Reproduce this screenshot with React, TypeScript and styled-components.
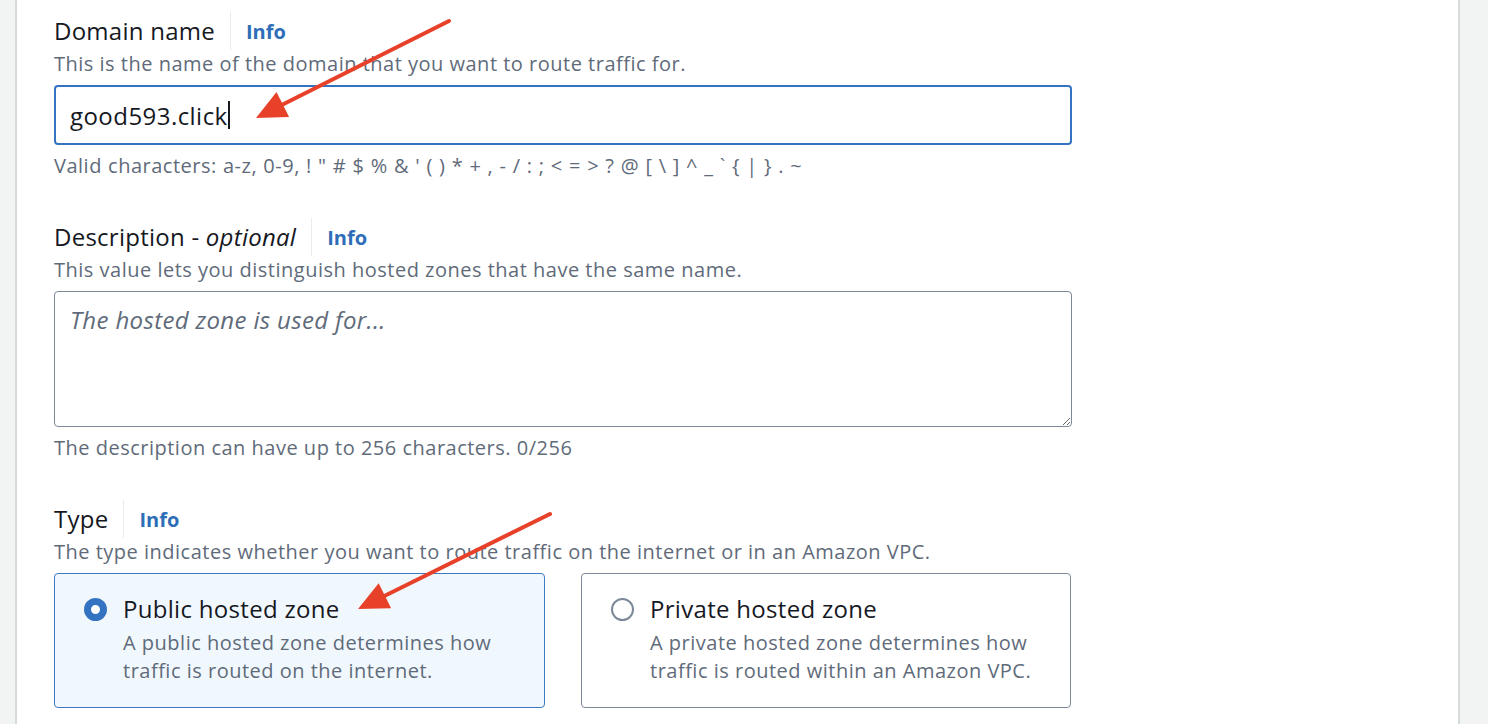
import React from "react";
import styled, { createGlobalStyle } from "styled-components";

const Global = createGlobalStyle`
  html, body { margin: 0; padding: 0; background: #f2f3f3; }
  body { font-family: "Open Sans", "Noto Sans", Arial, sans-serif; }
  * { box-sizing: border-box; }
`;

const Page = styled.div`
  position: relative;
  display: flex;
  width: 1488px;
  height: 724px;
  overflow: hidden;
  background: #f2f3f3;
`;

const Gutter = styled.div<{ $side: "left" | "right"; $w: number }>`
  flex: 0 0 ${(p) => p.$w}px;
  background: #f2f3f3;
  ${(p) => (p.$side === "left" ? "border-right" : "border-left")}: 2px solid #d5dbdb;
`;

const Panel = styled.main`
  flex: 1;
  background: #ffffff;
  padding: 12px 0 0 37px;
`;

const Column = styled.div`
  width: 1018px;
  display: flex;
  flex-direction: column;
  gap: 38px;
`;

const Field = styled.section`
  display: flex;
  flex-direction: column;
`;

const LabelRow = styled.div`
  display: flex;
  align-items: center;
  height: 38px;
`;

const Label = styled.span`
  font-size: 24px;
  letter-spacing: 0.25px;
  color: #16191f;
  padding-right: 15px;
  line-height: 38px;
  border-right: 1px solid #e9ebed;
  em { font-style: italic; }
`;

const Info = styled.a`
  font-size: 20px;
  font-weight: 700;
  color: #2e6eb8;
  padding-left: 15px;
  text-decoration: none;
`;

const Hint = styled.div<{ $wordGap?: number }>`
  font-size: 20px;
  letter-spacing: 0.5px;
  word-spacing: ${(p) => p.$wordGap ?? 0}px;
  line-height: 28px;
  color: #5f6b7a;
`;

const Constraint = styled(Hint)`
  margin-top: 7px;
`;

const InputBox = styled.div`
  margin-top: 7px;
  height: 60px;
  border: 2px solid #3473c2;
  border-radius: 4px;
  padding: 0 14px;
  display: flex;
  align-items: center;
  font-size: 24px;
  letter-spacing: 0.45px;
  color: #16191f;
`;

const Caret = styled.span`
  display: inline-block;
  width: 2px;
  height: 28px;
  background: #16191f;
`;

const TextArea = styled.textarea`
  margin-top: 7px;
  height: 136px;
  width: 100%;
  border: 1px solid #7d8998;
  border-radius: 4px;
  padding: 11px 15px;
  font-family: "Open Sans", "Noto Sans", Arial, sans-serif;
  font-size: 24px;
  letter-spacing: 0.35px;
  line-height: 34px;
  color: #16191f;
  resize: vertical;
  outline: none;
  &::placeholder {
    color: #5f6b7a;
    font-style: italic;
  }
`;

const Tiles = styled.div`
  margin-top: 7px;
  display: grid;
  grid-template-columns: 491px 490px;
  gap: 36px;
`;

const Tile = styled.label<{ $on?: boolean }>`
  display: flex;
  gap: 16px;
  height: 135px;
  padding: 21px 20px 0 29px;
  border: 1px solid ${(p) => (p.$on ? "#3f7ac4" : "#7d8998")};
  background: ${(p) => (p.$on ? "#f1f8fd" : "#ffffff")};
  border-radius: 4px;
`;

const Radio = styled.span<{ $on?: boolean }>`
  flex: 0 0 auto;
  width: 23px;
  height: 23px;
  margin-top: 3px;
  border-radius: 50%;
  ${(p) =>
    p.$on
      ? "border: 7px solid #3473c2; background: #fff;"
      : "border: 2px solid #7d8998; background: #fff;"}
`;

const TileText = styled.div`
  display: flex;
  flex-direction: column;
`;

const TileTitle = styled.div`
  font-size: 24px;
  letter-spacing: 0.3px;
  line-height: 28px;
  color: #16191f;
`;

const TileDesc = styled(Hint)`
  margin-top: 6px;
`;

const Arrows = styled.svg`
  position: absolute;
  left: 0;
  top: 0;
  pointer-events: none;
`;

const Arrow = ({ x1, y1, x2, y2 }: { x1: number; y1: number; x2: number; y2: number }) => {
  const dx = x2 - x1;
  const dy = y2 - y1;
  const len = Math.hypot(dx, dy);
  const ux = dx / len;
  const uy = dy / len;
  const headLen = 30;
  const headW = 14;
  const bx = x2 - ux * headLen;
  const by = y2 - uy * headLen;
  const px = -uy;
  const py = ux;
  return (
    <g>
      <line x1={x1} y1={y1} x2={bx + ux * 4} y2={by + uy * 4} stroke="#e8412a" strokeWidth={4} strokeLinecap="round" />
      <polygon
        points={`${x2},${y2} ${bx + px * headW},${by + py * headW} ${bx - px * headW},${by - py * headW}`}
        fill="#e8412a"
      />
    </g>
  );
};

export default function App() {
  return (
    <>
      <Global />
      <Page>
        <Gutter $side="left" $w={17} />
        <Panel>
          <Column>
            <Field>
              <LabelRow>
                <Label>Domain name</Label>
                <Info href="#">Info</Info>
              </LabelRow>
              <Hint>This is the name of the domain that you want to route traffic for.</Hint>
              <InputBox>
                good593.click
                <Caret />
              </InputBox>
              <Constraint $wordGap={0.55}>
                Valid characters: a-z, 0-9, ! " # $ % &amp; ' ( ) * + , - / : ; &lt; = &gt; ? @ [ \ ] ^ _ ` {"{"} | {"}"} . ~
              </Constraint>
            </Field>
            <Field>
              <LabelRow>
                <Label>
                  Description - <em>optional</em>
                </Label>
                <Info href="#">Info</Info>
              </LabelRow>
              <Hint>This value lets you distinguish hosted zones that have the same name.</Hint>
              <TextArea placeholder="The hosted zone is used for..." />
              <Constraint>The description can have up to 256 characters. 0/256</Constraint>
            </Field>
            <Field>
              <LabelRow>
                <Label>Type</Label>
                <Info href="#">Info</Info>
              </LabelRow>
              <Hint>The type indicates whether you want to route traffic on the internet or in an Amazon VPC.</Hint>
              <Tiles>
                <Tile $on>
                  <Radio $on />
                  <TileText>
                    <TileTitle>Public hosted zone</TileTitle>
                    <TileDesc>
                      A public hosted zone determines how
                      <br />
                      traffic is routed on the internet.
                    </TileDesc>
                  </TileText>
                </Tile>
                <Tile>
                  <Radio />
                  <TileText>
                    <TileTitle>Private hosted zone</TileTitle>
                    <TileDesc>
                      A private hosted zone determines how
                      <br />
                      traffic is routed within an Amazon VPC.
                    </TileDesc>
                  </TileText>
                </Tile>
              </Tiles>
            </Field>
          </Column>
        </Panel>
        <Gutter $side="right" $w={30} />
        <Arrows width={1488} height={724} viewBox="0 0 1488 724">
          <Arrow x1={449} y1={21} x2={256} y2={118} />
          <Arrow x1={550} y1={514} x2={358} y2={609} />
        </Arrows>
      </Page>
    </>
  );
}
